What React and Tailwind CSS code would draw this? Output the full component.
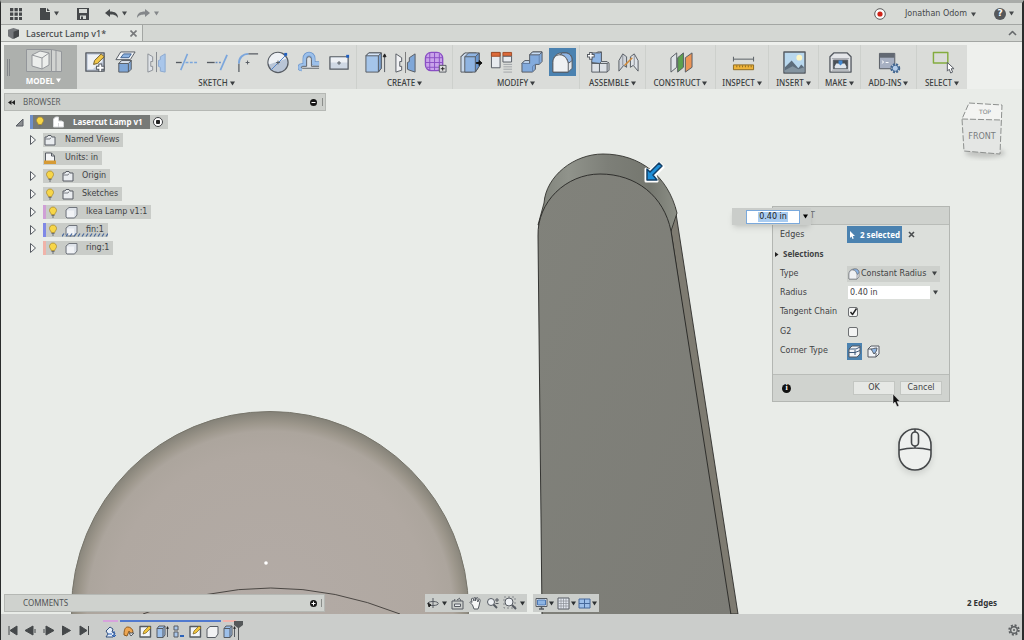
import { useState } from 'react';
import clsx from 'clsx';

const INK = '#565b62';
const BLUE = '#8db4e2';
const LIGHT = '#e3e8f0';

function Svg({ size = 24, box = 24, className, children }) {
  return (
    <svg
      width={size}
      height={size}
      viewBox={`0 0 ${box} ${box}`}
      fill="none"
      stroke={INK}
      strokeWidth="1"
      strokeLinejoin="round"
      className={clsx('shrink-0', className)}
      aria-hidden="true"
    >
      {children}
    </svg>
  );
}

const Caret = ({ className }) => (
  <svg width="5" height="5" viewBox="0 0 5 5" className={clsx('shrink-0', className)} aria-hidden="true">
    <path d="M0 .5h5L2.5 4.5z" fill="currentColor" />
  </svg>
);

/* ---------- toolbar icons ---------- */

const icons = {
  sketch: (
    <>
      <rect x="2" y="2" width="19" height="19" fill="#c3cddd" strokeWidth="1.400" />
      <path d="M4 4h15v7L9 19H4z" fill="#eef1f5" stroke="none" />
      <path d="M10 14l1-4 7-7 3 3-7 7z" fill="#f2c84b" stroke="#6d5a2a" />
      <path d="M17 13v9M12.500 17.500h9" stroke={INK} strokeWidth="4" />
      <path d="M17 14v7M13.500 17.500h7" stroke="#fff" strokeWidth="2" />
    </>
  ),
  project: (
    <>
      <path d="M7 1h15l-5 8H2z" fill="#f4f6f8" />
      <path d="M10 3h8l-2.500 4H7z" fill={BLUE} stroke="#3f5f8d" />
      <path d="M5 13l3-3h10v9l-3 3H5z" fill="#7fa7d8" />
      <path d="M5 13h10v9M15 13l3-3" />
      <path d="M5 13l3-3h10l-3 3z" fill="#dfe7f2" />
    </>
  ),
  mirrorSketch: (
    <>
      <path d="M3 3l5 3v5h-2v5h2v4l-5 2z" fill="#dfe3e8" stroke="#8c9096" />
      <path d="M21 3l-5 3v3l-2 1v6l2 1v4l5 1z" fill="#a9c6ea" stroke="#8ba8cf" />
      <path d="M12 1v21" stroke="#83878c" />
    </>
  ),
  trim: (
    <>
      <path d="M1 12h6" strokeWidth="1.400" />
      <path d="M6 20L13 3" stroke="#7ba6dc" strokeWidth="1.600" />
      <path d="M11 12h12" stroke="#7ba6dc" strokeDasharray="3 1.500" strokeWidth="1.400" />
    </>
  ),
  extend: (
    <>
      <path d="M1 12h8" strokeWidth="1.400" />
      <path d="M10 12h7" stroke="#6a8fc4" strokeDasharray="2 1.500" strokeWidth="1.400" />
      <path d="M15 20L22 4" stroke="#7ba6dc" strokeWidth="1.800" />
    </>
  ),
  filletSketch: (
    <>
      <path d="M2 22v-9" strokeWidth="1.300" />
      <path d="M2 13C2 7 6 3 12 3" stroke="#7ba6dc" strokeWidth="2" />
      <path d="M12 3h10" strokeWidth="1.300" />
      <path d="M11 10v4M9 12h4" />
    </>
  ),
  circle: (
    <>
      <circle cx="11.500" cy="12" r="10.500" fill="#b9c5d6" strokeWidth="1.300" />
      <path d="M2 14a9.500 9.500 0 0 1 18-6z" fill="#eef1f5" stroke="none" />
      <path d="M4 20L20 4" stroke="#4f81c4" />
      <rect x="18" y="2" width="3" height="3" fill="#1f5fc0" stroke="none" />
      <path d="M11.500 10v4M9.500 12h4" />
    </>
  ),
  offset: (
    <>
      <path d="M4 19C1 19 1 15 4 15h3V8c0-6.500 9-6.500 9 0v5h6" stroke="#6b95cc" strokeWidth="4.500" />
      <path d="M4 19C1 19 1 15 4 15h3V8c0-6.500 9-6.500 9 0v5h6" stroke="#9cc0ea" strokeWidth="3" />
      <path d="M22 18H5c-2 0-2-2 0-2h4V9c0-4 5-4 5 0v7h8" fill="#dfe3e6" stroke="#5c6167" />
    </>
  ),
  rect: (
    <>
      <rect x="2" y="6" width="19" height="13" fill="#cfd8e4" strokeWidth="1.300" />
      <path d="M3 7h17v5H3z" fill="#eef1f5" stroke="none" />
      <rect x="19" y="4" width="3" height="3" fill="#1f5fc0" stroke="none" />
      <path d="M11.500 10.500v4M9.500 12.500h4" />
    </>
  ),
  extrude: (
    <>
      <path d="M2 5l3-3h13v16l-3 4H2z" fill="#a5c5ea" />
      <path d="M15 22V5l3-3v16z" fill="#7fa7d8" />
      <path d="M2 5l3-3h13l-3 3z" fill="#d5e4f6" />
      <path d="M21.500 22V5" />
      <path d="M20 6l1.500-3L23 6z" fill="#222" stroke="#222" />
    </>
  ),
  mirror: (
    <>
      <path d="M2 3l6 4v4H6v5h2v4l-6 2z" fill="#f2f3f5" />
      <path d="M22 3l-6 4v4l-2 1v7l2 1 6 2z" fill="#7fa7d8" />
      <path d="M12 1v22" stroke="#777" />
    </>
  ),
  form: (
    <>
      <rect x="1.500" y="1.500" width="18" height="19" rx="6" fill="#c9a3ea" stroke="#8a4fc4" strokeWidth="1.400" />
      <path d="M6 2v18M11 1.500v19M16 3v16M2 7h17M2 12h17M3 17h16" stroke="#8a4fc4" />
      <rect x="16" y="15" width="7" height="7" fill="#ddd" />
      <path d="M19.500 16.500v4M17.500 18.500h4" stroke="#222" />
    </>
  ),
  press: (
    <>
      <path d="M1 6l4-4h12v14l-4 6H1z" fill="#c9d8ea" />
      <path d="M5 6l4-4h11v14l-4 6H5z" fill="#8fb4e2" />
      <path d="M16 22V6l4-4v14z" fill="#6b97cf" />
      <path d="M5 6h11M1 6l4-4" />
      <path d="M17 12h3v-2l3 2.500L20 15v-2h-3z" fill="#111" stroke="#111" />
    </>
  ),
  align: (
    <>
      <rect x="1.500" y="1.500" width="9" height="16" fill="#e8ebef" />
      <rect x="1.500" y="1.500" width="9" height="4" fill="#dc6a3a" stroke="#a04c28" />
      <rect x="13.500" y="1.500" width="9" height="4" fill="#dc6a3a" stroke="#a04c28" />
      <rect x="13.500" y="5.500" width="9" height="6" fill="#e8ebef" />
      <path d="M14 14h9M14 16.500h9M14 19h9M14 22h9" stroke="#a0a4a8" />
    </>
  ),
  combine: (
    <>
      <path d="M9 4l3-3h10v10l-3 3h-4v5l-3 3H1V13l3-3h5z" fill="#83abdd" />
      <path d="M9 4l3-3h10l-3 3zM1 13l3-3h5v3z" fill="#c4daf3" />
      <path d="M1 13h8M19 4v10M12 22v-6l3-2" stroke="#6483ad" />
    </>
  ),
  fillet: (
    <>
      <path d="M2 22V12C2 6 6 2 11 2h5c3 0 6 3 6 7v9l-4 4z" fill="#e3e6ea" />
      <path d="M9 4c6 0 8 4 9 9l4-3c0-5-3-8-7-8h-3z" fill="#8fb6e6" />
      <path d="M2 22V12C2 7 5 4 9 4c5 0 8 4 9 9v9z" fill="#eff1f3" />
    </>
  ),
  component: (
    <>
      <path d="M9 3l2-2h4v10h6l2 2v7l-2 2H5V11h4z" fill="#dde1e6" />
      <path d="M5 12V2h8l2-1v10l-2 2z" fill="#8fb6e6" />
      <path d="M13 13h8v9M5 13h8v9M21 13l2-1" />
      <path d="M4 1v8M0 5h8" strokeWidth="3.500" />
      <path d="M4 2v6M1 5h6" stroke="#fff" strokeWidth="1.500" />
    </>
  ),
  joint: (
    <>
      <path d="M2 10l4-7 4 3v11l-3-2-5 6z" fill="#cfd4da" />
      <path d="M22 10l-4-7-4 3v11l3-2 5 6z" fill="#dfe3e8" />
      <path d="M6 4v11M18 4v11" stroke="#8c9096" />
      <path d="M8 15L16 7" stroke="#d08a3a" strokeWidth="1.500" />
    </>
  ),
  plane: (
    <>
      <path d="M1 7l6-5v15l-6 5z" fill="#dfe3e8" />
      <path d="M8 7l6-5v15l-6 5z" fill="#5da04f" />
      <path d="M16 7l7-5v15l-7 5z" fill="#ed9556" />
    </>
  ),
  measure: (
    <>
      <path d="M1.500 6v5M22.500 6v5M2 8.500h20" />
      <rect x="1.500" y="14.500" width="21" height="5" fill="#efb43a" stroke="#8b6a21" />
      <path d="M5 15v2M8 15v2M11 15v2M14 15v2M17 15v2M20 15v2" stroke="#8b6a21" />
    </>
  ),
  image: (
    <>
      <rect x="1" y="1" width="22" height="22" fill="#b9d8ee" strokeWidth="1.500" />
      <circle cx="17" cy="7" r="3" fill="#fdf6c4" stroke="none" />
      <path d="M2 17l7-7 7 8 3-4 3 3v5H2z" fill="#5d6d7c" stroke="none" />
      <path d="M2 20l8-4 6 3 6-2v5H2z" fill="#8494a0" stroke="none" />
    </>
  ),
  make: (
    <>
      <path d="M1 22V6l4-4h14l4 4v16z" fill="#e4e6e9" strokeWidth="1.400" />
      <path d="M3 8h18M3 20h18" stroke="#9ea2a7" />
      <path d="M4.500 9.500h15v9h-15z" fill="#4a5057" />
      <path d="M6 16l1.500-3h9L18 16v2H6z" fill="#dfe5ec" stroke="none" />
      <path d="M10 10h4v3l-2 2-2-2z" fill="#4286cf" stroke="none" />
    </>
  ),
  addins: (
    <>
      <rect x="1.500" y="2.500" width="16" height="16" fill="#a7b0c2" />
      <path d="M2 3h15v4H2z" fill="#626973" stroke="none" />
      <path d="M4 10l2 1.500L4 13M8 12h3" stroke="#fff" />
      <circle cx="18" cy="18" r="4" fill="#dce8f6" stroke="#41658f" strokeWidth="2.400" strokeDasharray="2 1.200" />
      <circle cx="18" cy="18" r="3.200" fill="#b4cdea" stroke="#41658f" />
    </>
  ),
  select: (
    <>
      <rect x="1.500" y="1.500" width="15" height="11" stroke="#84ac3f" strokeWidth="1.500" />
      <path d="M16 12v9l2-2 1.500 4 2-1-1.500-3.500h3z" fill="#fff" />
    </>
  ),
};

const groups = [
  { label: 'SKETCH', width: 'w-[280px]', items: ['sketch', 'project', 'mirrorSketch', 'trim', 'extend', 'filletSketch', 'circle', 'offset', 'rect'] },
  { label: 'CREATE', width: 'w-[96px]', items: ['extrude', 'mirror', 'form'] },
  { label: 'MODIFY', width: 'w-[127px]', items: ['press', 'align', 'combine', 'fillet'] },
  { label: 'ASSEMBLE', width: 'w-[66px]', items: ['component', 'joint'] },
  { label: 'CONSTRUCT', width: 'w-[70px]', items: ['plane'] },
  { label: 'INSPECT', width: 'w-[53px]', items: ['measure'] },
  { label: 'INSERT', width: 'w-[50px]', items: ['image'] },
  { label: 'MAKE', width: 'w-[42px]', items: ['make'] },
  { label: 'ADD-INS', width: 'w-[56px]', items: ['addins'] },
  { label: 'SELECT', width: 'w-[50px]', items: ['select'] },
];

function TopBar() {
  return (
    <header className="flex h-[22px] items-center border-b border-[#a3a6a3] bg-[#d7dad6] px-2 text-[#45484a]">
      <button aria-label="Data panel" className="flex w-[14px] justify-center">
        <svg width="12" height="12" viewBox="0 0 12 12" fill="#45484a">
          {[0, 4.5, 9].map((y) => [0, 4.5, 9].map((x) => <rect key={`${x}-${y}`} x={x} y={y} width="3.3" height="3.3" />))}
        </svg>
      </button>
      <button aria-label="File" className="ml-[17px] flex items-center gap-1">
        <svg width="10" height="12" viewBox="0 0 10 12" fill="#45484a">
          <path d="M0 0h6v4h4v8H0zM7 0l3 3H7z" />
        </svg>
        <Caret />
      </button>
      <button aria-label="Save" className="ml-[18px]">
        <svg width="12" height="12" viewBox="0 0 12 12" fill="#45484a">
          <path fillRule="evenodd" d="M0 0h12v12H0zM2 1v4h8V1zM3 7.500V11h1V8.500h2V11h3V7.500z" />
        </svg>
      </button>
      <button aria-label="Undo" className="ml-[16px] flex items-center gap-1">
        <svg width="13" height="10" viewBox="0 0 13 10" fill="#45484a">
          <path d="M0 4l5-4v2.500c5 0 8 2 8 6.500-2-3-4-3.500-8-3.500V8z" />
        </svg>
        <Caret />
      </button>
      <button aria-label="Redo" className="ml-[10px] flex items-center gap-1 text-[#84878a]">
        <svg width="13" height="10" viewBox="0 0 13 10" fill="#84878a">
          <path d="M13 4L8 0v2.500C3 2.500 0 4.500 0 9c2-3 4-3.500 8-3.500V8z" />
        </svg>
        <Caret />
      </button>
      <button aria-label="Record" className="ml-auto">
        <svg width="12" height="12" viewBox="0 0 12 12">
          <circle cx="6" cy="6" r="5.300" fill="#fbfbfb" stroke="#5b5b5b" />
          <circle cx="6" cy="6" r="2.600" fill="#cf2318" />
        </svg>
      </button>
      <button className="ml-[19px] flex items-center gap-1 pt-px text-[8px]">
        Jonathan Odom <Caret />
      </button>
      <button aria-label="Help" className="ml-[18px] flex items-center gap-[3px]">
        <span className="flex size-[12px] items-center justify-center rounded-full bg-[#55585a] text-[9px] font-bold text-white">?</span>
        <Caret />
      </button>
    </header>
  );
}

function TabBar() {
  return (
    <div className="flex h-[17px] items-stretch justify-between border-b border-[#a3a6a3] bg-[#d4d7d3] text-[#45484a]">
      <div className="flex w-[142px] items-center border-r border-[#a3a6a3] bg-[#e2e5e1] pr-[5px] pl-[7px]">
        <Svg size={11} box={12}>
          <path d="M0 2l6-2 6 2v7l-7 3-5-3z" fill="#74777a" stroke="none" />
          <path d="M6 4l6-2v7l-6 3z" fill="#45484a" stroke="none" />
        </Svg>
        <span className="ml-[7px] pt-px font-['Noto_Sans'] text-[9px] font-medium whitespace-nowrap">Lasercut Lamp v1*</span>
        <button aria-label="Close tab" className="ml-auto">
          <Svg size={7} box={7}>
            <path d="M.5.5l6 6M6.500.5l-6 6" stroke="#77797b" strokeWidth="1.600" />
          </Svg>
        </button>
      </div>
      <button aria-label="Collapse toolbar" className="pr-[5px]">
        <Svg size={9} box={9}>
          <path d="M1 6l3.500-3.500L8 6" stroke="#66696b" strokeWidth="1.600" />
        </Svg>
      </button>
    </div>
  );
}

function Toolbar() {
  return (
    <nav className="flex h-[47px] bg-[#eef0ed] pt-[3px] pl-[3px] font-['Noto_Sans'] text-[8px] font-medium text-[#3b3e40]">
      <button className="flex w-[73px] shrink-0 items-center bg-[#adb0ad] pl-[3px] font-bold text-white">
        <span className="h-[17px] w-[3px] border-x border-[#83868a]" />
        <span className="flex flex-1 flex-col items-center pt-[2px]">
          <svg width="36" height="23" viewBox="0 0 36 23" fill="none" stroke="#93969a">
            <path d="M.5.500h25v22H.5z" fill="#c3c6c4" />
            <path d="M25.500.500l10 2v20h-10z" fill="#d1d3d1" />
            <path d="M30 1v21" />
            <path d="M6 6l8-4 9 2v12l-7 4-10-3z" fill="#eceeec" />
            <path d="M6 6l10 3v11M16 9l7-5" />
          </svg>
          <span className="flex items-center gap-[2px] pt-[2px] leading-[14px]">
            MODEL <Caret />
          </span>
        </span>
      </button>
      {groups.map((group) => (
        <section key={group.label} className={clsx('flex shrink-0 flex-col border-r border-[#cdd0cc] bg-[#dadcd9] pt-[3px] last:border-r-0', group.width)}>
          <div className="flex h-[28px] items-center justify-around pr-px pl-[3px]">
            {group.items.map((name) => (
              <button
                key={name}
                aria-label={name}
                className={clsx('flex h-[28px] w-[27px] items-center justify-center', name === 'fillet' && 'bg-[#4b82b0]')}
              >
                <Svg size={23}>{icons[name]}</Svg>
              </button>
            ))}
          </div>
          <button className="flex items-center justify-center gap-[2px] leading-[14px]">
            {group.label} <Caret />
          </button>
        </section>
      ))}
    </nav>
  );
}

/* ---------- browser tree ---------- */

const Bulb = () => (
  <Svg size={12} box={12}>
    <path d="M6 1C3.500 1 2.500 3 2.500 4.500S4 7 4.300 8.500h3.400C8 7 9.500 6 9.500 4.500S8.500 1 6 1z" fill="#f7d649" stroke="#a88a2c" strokeWidth=".8" />
    <path d="M4.500 9.500h3M5 11h2" stroke="#6f7276" />
  </Svg>
);

const Folder = () => (
  <Svg size={12} box={12}>
    <path d="M1 11V3h2l1-1.500h3L8 3h3v8z" fill="#e9ecef" />
    <path d="M1 5h5l1-1.500" stroke="#7b7f85" />
  </Svg>
);

const Body = () => (
  <Svg size={13} box={13}>
    <path d="M1 4l3-2.500h8V9l-2.500 3H2l-1-1z" fill="#dfe4ea" stroke="#70757c" />
    <path d="M2 4.500h7V11H2z" fill="#f1f3f6" stroke="none" />
  </Svg>
);

const Units = () => (
  <Svg size={12} box={12}>
    <path d="M1.500 11V1h6l3 3v7z" fill="#f4f5f6" />
    <path d="M7.500 1v3h3" />
    <path d="M0 8.500h12V12H0z" fill="#d69b35" stroke="none" />
  </Svg>
);

const rows = [
  { label: 'Named Views', icon: <Folder /> },
  { label: 'Units: in', icon: <Units />, leaf: true },
  { label: 'Origin', icon: <Folder />, bulb: true },
  { label: 'Sketches', icon: <Folder />, bulb: true },
  { label: 'Ikea Lamp v1:1', icon: <Body />, bulb: true, tag: 'bg-[#cf9fd6]' },
  { label: 'fin:1', icon: <Body />, bulb: true, tag: 'bg-[#8088e6]', dashed: true },
  { label: 'ring:1', icon: <Body />, bulb: true, tag: 'bg-[#f0b3a9]' },
];

function BrowserPanel() {
  return (
    <aside className="w-[322px] text-[8px] text-[#3f4244]">
      <div className="flex h-[18px] items-center border border-[#b5b8b4] bg-[#cdd0cc] pr-[2px] pl-[3px] font-['Noto_Sans'] text-[#5b5e60]">
        <Svg size={7} box={7}>
          <path d="M3.500 1v5L0 3.500zM7 1v5L3.500 3.500z" fill="#222" stroke="none" />
        </Svg>
        <span className="ml-2">BROWSER</span>
        <button aria-label="Collapse browser" className="ml-auto">
          <Svg size={7} box={7}>
            <circle cx="3.500" cy="3.500" r="3.500" fill="#161616" stroke="none" />
            <path d="M1.500 3.500h4" stroke="#fff" />
          </Svg>
        </button>
        <span className="ml-[4px] h-[8px] w-[2px] border-r border-[#8a8d8a]" />
      </div>
      <div className="mt-[2px] flex h-[18px] items-center pl-[11px]">
        <button aria-label="Collapse Lasercut Lamp">
          <Svg size={9} box={9}>
            <path d="M8 1v7H1z" fill="#8b8e91" />
          </Svg>
        </button>
        <div className="ml-[6px] flex h-[14px] items-center bg-[#c9ccc8]">
          <div className="flex h-[14px] items-center border-l-[3px] border-[#6f8fc9] bg-[#777a77] pr-[7px] pl-px font-bold text-white">
            <Bulb />
            <Svg size={12} box={12} className="ml-[6px]">
              <path d="M1.500 11V3l2-2h3v4h3l2 1v5h-5V7v4z" fill="#fff" stroke="#d6d8da" />
            </Svg>
            <span className="ml-[9px] font-['Noto_Sans']">Lasercut Lamp v1</span>
          </div>
          <input
            type="radio"
            name="active"
            aria-label="Activate component"
            defaultChecked
            className="mr-[5px] ml-[3px] size-[10px] appearance-none rounded-full border border-[#3b3e40] bg-white bg-radial from-[#222] from-35% to-white to-45%"
          />
        </div>
      </div>
      <ul>
        {rows.map((row) => (
          <li key={row.label} className="flex h-[18px] items-center pl-[25px]">
            <button aria-label={`Expand ${row.label}`} className={clsx('w-[8px]', row.leaf && 'invisible')}>
              <Svg size={8} box={8} className="h-[10px]">
                <path d="M1.500-.5v9l5-4.500z" fill="#f5f6f5" />
              </Svg>
            </button>
            <div className="relative ml-[6px] flex h-[14px] items-center bg-[#c9ccc8] pr-[4px]">
              {row.tag && <span className={clsx('h-full w-[3px]', row.tag)} />}
              {row.bulb && (
                <span className="mr-[6px] ml-px">
                  <Bulb />
                </span>
              )}
              {!row.bulb && <span className="w-px" />}
              {row.icon}
              <span className={row.bulb ? 'ml-[8px]' : 'ml-[9px]'}>{row.label}</span>
              {row.dashed && (
                <svg className="absolute right-0 bottom-0 h-[4px] w-[46px]" aria-hidden="true">
                  <path d="M0 3.500l2-3M4 3.500l2-3M8 3.500l2-3M12 3.500l2-3M16 3.500l2-3M20 3.500l2-3M24 3.500l2-3M28 3.500l2-3M32 3.500l2-3M36 3.500l2-3M40 3.500l2-3M44 3.500l2-3" stroke="#4a6a9c" strokeWidth="1.300" />
                </svg>
              )}
            </div>
          </li>
        ))}
      </ul>
    </aside>
  );
}

/* ---------- canvas ---------- */

function Model() {
  return (
    <svg className="absolute inset-0 h-full w-full" viewBox="1 89 1021 525" preserveAspectRatio="xMidYMid slice" aria-hidden="true">
      <defs>
        <radialGradient id="dome" gradientUnits="userSpaceOnUse" cx="270" cy="614" r="201">
          <stop offset="0" stopColor="#b3aba6" />
          <stop offset=".8" stopColor="#b0a8a1" />
          <stop offset=".91" stopColor="#aca59d" />
          <stop offset=".95" stopColor="#9d978c" />
          <stop offset="1" stopColor="#87847a" />
        </radialGradient>
        <linearGradient id="rim" x1="0" x2="1">
          <stop offset="0" stopColor="#7f827a" />
          <stop offset=".22" stopColor="#90938b" />
          <stop offset=".5" stopColor="#7d7f78" />
          <stop offset=".8" stopColor="#75776f" />
          <stop offset="1" stopColor="#8c8f86" />
        </linearGradient>
        <linearGradient id="face" x1="0" x2="1" y1="0" y2="1">
          <stop offset="0" stopColor="#81827b" />
          <stop offset="1" stopColor="#7c7c76" />
        </linearGradient>
      </defs>
      <circle cx="270" cy="610" r="198.500" fill="url(#dome)" stroke="#77756b" />
      <path d="M143 614Q270 562 400 614" fill="none" stroke="#3e3b38" strokeWidth=".9" />
      <circle cx="266" cy="563" r="1.800" fill="#fff" />
      <path d="M675 207L738 614H728L671 231z" fill="#7e7b71" stroke="#2e2e2b" strokeWidth=".9" />
      <path d="M538 225L544 203C546 176 574 154 603 154C640 154 668 176 677 213L671 231z" fill="url(#rim)" stroke="#33332f" strokeWidth=".9" />
      <path d="M542 615L538 236C537 202 566 174 600 174C636 174 664 196 671 231L731 615z" fill="url(#face)" stroke="#262624" strokeWidth=".9" />
    </svg>
  );
}

function ViewCube() {
  return (
    <svg className="absolute top-[10px] right-[13px] h-[62px] w-[50px]" viewBox="0 0 50 62" aria-label="View cube">
      <ellipse cx="26" cy="54" rx="20" ry="5" fill="#c3c5c2" className="blur-[2px]" />
      <path d="M10 4l33 2-1 15-39-1z" fill="#f3f4f2" />
      <path d="M3 20l39 1-1 34-36-3z" fill="#e4e6e4" />
      <path d="M10 4l33 2-2 49-36-3-2-32zM3 20l39 1" fill="none" stroke="#8d908e" strokeDasharray="6 2" />
      <text x="26" y="15" textAnchor="middle" fontSize="6" fill="#7b7e80">TOP</text>
      <text x="23" y="40" textAnchor="middle" fontSize="8" fill="#797c7e">FRONT</text>
    </svg>
  );
}

function FilletDialog() {
  const [radius, setRadius] = useState('0.40 in');
  const [chain, setChain] = useState(true);
  const [g2, setG2] = useState(false);
  const row = 'flex items-center pl-[7px]';
  const name = 'w-[67px] shrink-0';
  const box = 'size-[10px] appearance-none rounded-[2px] border border-[#6d7072] bg-[#f3f4f3]';

  return (
    <form className="absolute top-[117px] right-[72px] w-[178px] border border-[#b3b6b2] bg-[#dcdfdb] text-[8px] text-[#3f4244]" onSubmit={(e) => e.preventDefault()}>
      <div className="flex h-[18px] items-center border-b border-[#b9bcb8] bg-[#cfd2ce] pl-[37px] text-[#6b6e70]">T</div>
      <div className="mb-[13px] grid h-[136px] grid-rows-7">
        <div className={row}>
          <span className={name}>Edges</span>
          <button type="button" className="flex h-[17px] w-[55px] items-center justify-center gap-[3px] bg-[#4b82b0] font-['Noto_Sans'] font-bold whitespace-nowrap text-white">
            <Svg size={8} box={8}>
              <path d="M1 0v7l1.500-1.500 1 2.500 1.200-.5L3.800 5H6z" fill="#fff" stroke="none" />
            </Svg>
            2 selected
          </button>
          <button type="button" aria-label="Clear edges" className="ml-[6px]">
            <Svg size={7} box={7}>
              <path d="M1 1l5 5M6 1L1 6" stroke="#4a4d4f" strokeWidth="1.600" />
            </Svg>
          </button>
        </div>
        <button type="button" className="flex items-center gap-[4px] pl-px font-['Noto_Sans'] font-bold">
          <Svg size={5} box={5}>
            <path d="M1 0v5l3.500-2.500z" fill="#222" stroke="none" />
          </Svg>
          Selections
        </button>
        <div className={row}>
          <label className={name} htmlFor="type">Type</label>
          <div className="relative flex h-[16px] w-[93px] items-center bg-[#cdd0cc] pl-px">
            <Svg size={12}>{icons.fillet}</Svg>
            <select id="type" className="flex-1 appearance-none bg-transparent pl-px outline-none">
              <option>Constant Radius</option>
            </select>
            <Caret className="pointer-events-none absolute right-[3px]" />
          </div>
        </div>
        <div className={row}>
          <label className={name} htmlFor="radius">Radius</label>
          <input id="radius" value={radius} onChange={(e) => setRadius(e.target.value)} className="ml-px h-[13px] w-[82px] bg-white pl-[2px] outline-none" />
          <Caret className="ml-[3px]" />
        </div>
        <div className={row}>
          <label className={name} htmlFor="chain">Tangent Chain</label>
          <span className="relative ml-px flex">
            <input id="chain" type="checkbox" checked={chain} onChange={(e) => setChain(e.target.checked)} className={box} />
            {chain && (
              <Svg size={10} box={10} className="pointer-events-none absolute">
                <path d="M2.500 5L4.500 7.500 8.500 1.500" stroke="#222" strokeWidth="1.400" />
              </Svg>
            )}
          </span>
        </div>
        <div className={row}>
          <label className={name} htmlFor="g2">G2</label>
          <input id="g2" type="checkbox" checked={g2} onChange={(e) => setG2(e.target.checked)} className={clsx(box, 'ml-px')} />
        </div>
        <div className={row}>
          <span className={name}>Corner Type</span>
          <button type="button" aria-label="Rolling ball" aria-pressed="true" className="flex h-[17px] w-[15px] items-center justify-center bg-[#4b82b0]">
            <Svg size={13} box={13}>
              <path d="M1 4l3-3h8v8l-3 3H1z" fill="#f1f4f8" />
              <path d="M1 7.500h6l5-2M7 5v5M1 4h7l4-2" stroke="#3d5878" />
            </Svg>
          </button>
          <button type="button" aria-label="Setback" aria-pressed="false" className="ml-[5px]">
            <Svg size={13} box={13}>
              <path d="M1 4l3-3h8v8l-3 3H1z" fill="#f1f4f8" />
              <path d="M1 4h3M9 12V8M4 4c2 0 3-1 6-1 0 3-2 5-3 6-1-2-2-3-3-5z" fill={BLUE} />
            </Svg>
          </button>
        </div>
      </div>
      <div className="flex h-[27px] items-center gap-[5px] border-t border-[#b9bcb8] bg-[#d0d3cf] pr-[7px] pl-[9px]">
        <span className="mr-auto flex size-[9px] items-center justify-center rounded-full bg-[#111] font-['Liberation_Serif'] font-bold text-white">i</span>
        <button type="submit" className="h-[14px] w-[42px] border border-[#c3c6c2] bg-[#e6e8e5]">OK</button>
        <button type="button" className="h-[14px] w-[42px] border border-[#c3c6c2] bg-[#e6e8e5]">Cancel</button>
      </div>
    </form>
  );
}

function RadiusInput() {
  return (
    <div className="absolute top-[119px] right-[211px] flex h-[17px] w-[79px] items-center bg-[#cacdca] pl-[14px] shadow-md">
      <div className="flex h-[14px] w-[54px] items-center justify-center border border-[#7aa9dc] bg-white">
        <input aria-label="Radius value" defaultValue="0.40 in" className="h-[10px] w-[30px] bg-[#a9ccf1] text-center text-[8px] text-[#222] outline-none" />
      </div>
      <Caret className="ml-[3px]" />
    </div>
  );
}

function Pointers() {
  return (
    <>
      <svg className="absolute top-[72px] left-[642px] size-[24px]" viewBox="0 0 24 24" aria-hidden="true">
        <path d="M3 20V8l4 2 9-8 4 4-8 8 2 6z" fill="#fff" stroke="#fff" strokeWidth="3" strokeLinejoin="round" />
        <path d="M4 19V8l3 3 9-9 3 3-9 9 4 5z" fill="#1f8fd8" stroke="#123f66" strokeWidth="1.500" strokeLinejoin="round" />
      </svg>
      <svg className="absolute top-[305px] right-[122px] h-[13px] w-[8px]" viewBox="0 0 8 13" aria-hidden="true">
        <path d="M1 0v10l2-2 2 4.500L7 12 5 7.500h3z" fill="#111" stroke="#eee" strokeWidth=".5" />
      </svg>
      <svg className="absolute top-[336px] right-[84px] h-[52px] w-[44px] drop-shadow-md" viewBox="0 0 44 52" aria-hidden="true">
        <rect x="5" y="4" width="32" height="41" rx="16" fill="#eef0ee" stroke="#45484a" strokeWidth="1.600" />
        <path d="M5 25q16-4 32 0M21 4v3M21 19v4" fill="none" stroke="#45484a" strokeWidth="1.600" />
        <rect x="17.500" y="7" width="7" height="14" rx="3.500" fill="#eef0ee" stroke="#45484a" strokeWidth="1.600" />
      </svg>
    </>
  );
}

/* ---------- bottom bars ---------- */

function NavBar() {
  return (
    <div className="flex gap-[6px] text-[#2d3032]">
      <div className="flex h-[18px] w-[102px] items-center justify-between bg-[#cbcecb] px-[2px]">
        <button aria-label="Orbit" className="flex items-center gap-[3px]">
          <Svg size={12} box={12}>
            <path d="M6 1v10M6 4.500c-7 0-7 4 0 4s7-4 0-4" />
            <path d="M1 6l3 2-2 2z" fill="#222" stroke="#222" />
          </Svg>
          <Caret />
        </button>
        <button aria-label="Look at">
          <Svg size={13} box={13}>
            <path d="M1 4h11v8H1zM3 4l1-2M10 4L9 2M6 3l3-2" />
            <path d="M3.500 7h6v2.500h-6z" fill="#e8ebee" />
          </Svg>
        </button>
        <button aria-label="Pan">
          <Svg size={13} box={13}>
            <path d="M3.500 8L1 5.500c0-1 1-1 2 0L2.500 2c0-1 1.500-1 1.800 0l.7 2V1c0-1 1.500-1 1.500 0v3L7.500 1C7.800 0 9 .5 9 1.500L8.700 5l1.300-2.500c.5-.8 1.500 0 1.200 1L10 9l-1 3H5z" fill="#f6f7f6" />
          </Svg>
        </button>
        <button aria-label="Zoom">
          <Svg size={13} box={13}>
            <circle cx="5" cy="5" r="3.500" fill="#eef1f4" />
            <path d="M7.500 7.500L11 11" strokeWidth="2" />
            <path d="M9 3h4M11 1v4M9.500 6.500h3" />
          </Svg>
        </button>
        <button aria-label="Fit" className="flex items-center gap-[3px]">
          <Svg size={14} box={14}>
            <path d="M1 1h11v11H1z" strokeDasharray="2 2" stroke="#84888c" />
            <circle cx="6" cy="6" r="4" fill="#eef1f4" />
            <path d="M9 9l4 4" strokeWidth="2" />
          </Svg>
          <Caret />
        </button>
      </div>
      <div className="flex h-[18px] w-[66px] items-center justify-between bg-[#cbcecb] px-[2px]">
        <button aria-label="Display settings" className="flex items-center gap-px">
          <Svg size={13} box={13}>
            <path d="M1 1.500h11v8H1z" fill="#f0f2f4" />
            <path d="M2.500 3h8v5h-8z" fill={BLUE} stroke="#4c78b4" />
            <path d="M4 12h5M6.500 10v2" strokeWidth="1.500" />
          </Svg>
          <Caret />
        </button>
        <button aria-label="Grid" className="flex items-center gap-px">
          <Svg size={13} box={13}>
            <path d="M1 1h11v11H1z" fill={LIGHT} />
            <path d="M4 1v11M6.500 1v11M9 1v11M1 4h11M1 6.500h11M1 9h11" stroke="#8a8e93" strokeWidth=".7" />
          </Svg>
          <Caret />
        </button>
        <button aria-label="Viewports" className="flex items-center gap-px">
          <Svg size={13} box={13}>
            <path d="M1 2h11v9H1z" fill="#9dbfe9" stroke="#46699b" />
            <path d="M6.500 2v9M1 6.500h11" stroke="#46699b" />
          </Svg>
          <Caret />
        </button>
      </div>
    </div>
  );
}

function BottomRow() {
  return (
    <div className="relative mt-auto grid grid-cols-[1fr_auto_1fr] items-center pr-[2px] pb-[2px] pl-[3px] text-[8px]">
      <div className="flex h-[18px] w-[321px] items-center border border-[#b5b8b4] bg-[#cfd2ce] pr-[2px] pl-[18px] font-['Noto_Sans'] text-[#4f5254]">
        COMMENTS
        <button aria-label="Expand comments" className="ml-auto">
          <Svg size={7} box={7}>
            <circle cx="3.500" cy="3.500" r="3.500" fill="#161616" stroke="none" />
            <path d="M1.500 3.500h4M3.500 1.500v4" stroke="#fff" />
          </Svg>
        </button>
        <span className="ml-[3px] h-[8px] w-[2px] border-r border-[#8a8d8a]" />
      </div>
      <NavBar />
      <span className="pr-[23px] text-right font-['Noto_Sans'] font-bold text-[#303335]">2 Edges</span>
    </div>
  );
}

const features = {
  insert: (
    <>
      <path d="M2 6l4-4 3 2-1 3 3 1-2 4H2l2-3z" fill="#e6eefa" stroke="#33507e" />
      <path d="M4 9h4M10 6v6M8 10l2 2 2-2" stroke="#2b62b8" />
    </>
  ),
  base: (
    <>
      <path d="M2 10c0-7 2-8 4-8s5 2 5 5l-2 2-2-3-2 5z" fill="#eda653" stroke="#8d5a1e" />
      <path d="M7 8l5 0-3 3z" fill="#e9ecef" />
    </>
  ),
  sketch: (
    <>
      <path d="M1 1.500h10.500V12H1z" fill="#f2f4f7" strokeWidth="1.400" />
      <path d="M4 9l1-3 5-5 2 2-5 5z" fill="#f2c43c" stroke="#77601f" strokeWidth=".7" />
    </>
  ),
  extrude: (
    <>
      <path d="M1 3.500L3 1h6v9l-2 2.500H1z" fill="#9dc0ea" />
      <path d="M1 3.500h6v9M7 3.500L9 1M11.500 12V3" />
      <path d="M10.500 3.500l1-2 1 2z" fill="#222" stroke="#222" strokeWidth=".5" />
    </>
  ),
  pattern: (
    <>
      <path d="M2 1h4v4H2zM2 7h4v5H2z" fill="#a9c6ea" />
      <path d="M8 10h4v2H8z" fill="#2b62b8" stroke="none" />
    </>
  ),
  body: (
    <path d="M1 4l3-2.500h8V9l-2.500 3.500H1z" fill="#f1f2f3" />
  ),
};

const timeline = [
  { bar: 'bg-[#d7a3dc]', width: 'w-[15px]', items: ['insert'] },
  { bar: 'bg-[#5079cf]', width: 'w-[101px]', items: ['base', 'sketch', 'extrude', 'pattern', 'sketch', 'body'] },
  { bar: 'bg-[#f2b5ad]', width: 'w-[13px]', items: ['extrude'] },
];

const playback = [
  ['Go to start', 'M2 1v9M10 1v9L3 5.500z'],
  ['Step back', 'M8 1v9L0 5.500zM10 4v4'],
  ['Step forward', 'M3 1v9l8-4.500zM1 4v4'],
  ['Play', 'M1.500 1v9L9.500 5.500z'],
  ['Go to end', 'M1 1v9l7-4.500zM9.500 1v9'],
];

function Timeline() {
  return (
    <footer className="flex h-[26px] shrink-0 items-stretch bg-[#cbcdcb] pr-[2px] pl-[6px]">
      <div className="flex items-center gap-[7px] pt-[7px]">
        {playback.map(([label, d]) => (
          <button key={label} aria-label={label}>
            <svg width="11" height="11" viewBox="0 0 11 11" fill="#45484a" stroke="#45484a" strokeWidth="1">
              <path d={d} />
            </svg>
          </button>
        ))}
      </div>
      <div className="ml-[13px] flex gap-[2px] pt-[6px]">
        {timeline.map((group, i) => (
          <div key={i} className={group.width}>
            <div className={clsx('h-[2px]', group.bar)} />
            <div className="flex justify-around pt-[3px]">
              {group.items.map((item, n) => (
                <button key={n} aria-label={item}>
                  <Svg size={13} box={13}>{features[item]}</Svg>
                </button>
              ))}
            </div>
          </div>
        ))}
        <svg width="9" height="20" viewBox="0 0 9 20" className="-ml-1" aria-hidden="true">
          <path d="M0 1h9v4L5 8v12H4V8L0 5z" fill="#55585a" />
        </svg>
      </div>
      <button aria-label="Timeline settings" className="ml-auto pt-[5px]">
        <Svg size={12} box={12}>
          <circle cx="6" cy="6" r="4.800" stroke="#5c5f61" strokeWidth="1.800" strokeDasharray="2 1.770" />
          <circle cx="6" cy="6" r="3.300" stroke="#5c5f61" strokeWidth="1.400" />
          <circle cx="6" cy="6" r="1" fill="#5c5f61" stroke="none" />
        </Svg>
      </button>
    </footer>
  );
}

export default function App() {
  return (
    <div className="flex h-screen flex-col overflow-hidden border-t-[3px] border-r-2 border-l border-t-[#a9aca9] border-r-[#2a2c2c] border-l-[#2a2c2c] bg-[#e9ece8] font-['DejaVu_Sans',sans-serif]">
      <TopBar />
      <TabBar />
      <Toolbar />
      <main className="relative flex min-h-0 flex-1 flex-col">
        <Model />
        <div className="relative pt-[4px] pl-[3px]">
          <BrowserPanel />
        </div>
        <ViewCube />
        <FilletDialog />
        <RadiusInput />
        <Pointers />
        <BottomRow />
      </main>
      <Timeline />
    </div>
  );
}
